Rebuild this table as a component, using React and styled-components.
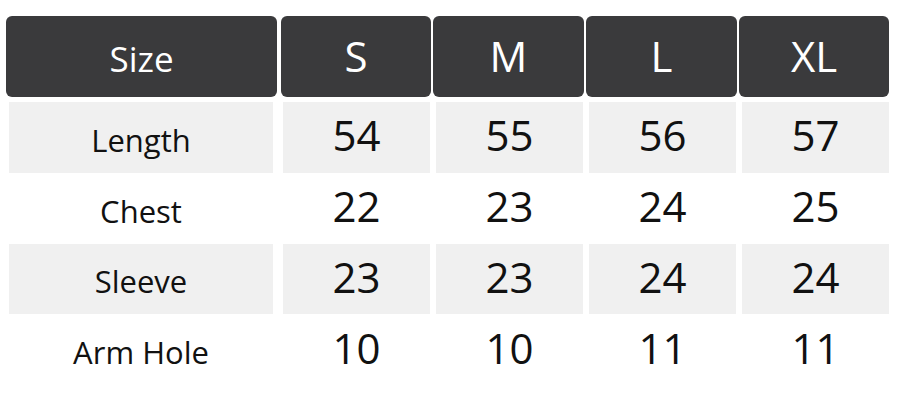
import React from "react";
import styled, { createGlobalStyle } from "styled-components";

const Global = createGlobalStyle`
  html, body { margin: 0; padding: 0; background: #ffffff; }
  body { font-family: "Open Sans", "Noto Sans", sans-serif; }
`;

const Chart = styled.div`
  width: 900px;
  height: 400px;
  padding-top: 16px;
  box-sizing: border-box;
  background: #ffffff;
`;

const HeaderRow = styled.div`
  display: grid;
  grid-template-columns: 273px 150px 151px 151px 150px;
  column-gap: 2px;
  margin-left: 6px;
  height: 81px;
`;

const HeaderCell = styled.div`
  display: flex;
  align-items: center;
  justify-content: center;
  background: #3a3a3c;
  color: #ffffff;
  border-radius: 6px;
  margin-right: ${(p) => (p.$first ? "2px" : "0")};
  font-size: ${(p) => (p.$first ? "35px" : "42px")};
  padding-top: ${(p) => (p.$first ? "4px" : "0")};
  padding-bottom: ${(p) => (p.$first ? "0" : "3px")};
  box-sizing: border-box;
`;

const Body = styled.div`
  margin-top: 5px;
  display: flex;
  flex-direction: column;
`;

const Row = styled.div`
  display: grid;
  grid-template-columns: 268px 147px 147px 147px 147px;
  column-gap: 6px;
  margin-left: 9px;
  height: 70.8px;
`;

const Cell = styled.div`
  display: flex;
  align-items: center;
  justify-content: center;
  background: ${(p) => (p.$shaded ? "#f0f0f0" : "transparent")};
  color: #111111;
  box-sizing: border-box;
`;

const LabelCell = styled(Cell)`
  margin-right: 4px;
  font-size: 31px;
  padding-top: 5px;
`;

const ValueCell = styled(Cell)`
  font-size: 42px;
  padding-bottom: 5px;
`;

const sizes = ["S", "M", "L", "XL"];
const rows = [
  ["Length", [54, 55, 56, 57]],
  ["Chest", [22, 23, 24, 25]],
  ["Sleeve", [23, 23, 24, 24]],
  ["Arm Hole", [10, 10, 11, 11]],
];

export default function App() {
  return (
    <>
      <Global />
      <Chart>
        <HeaderRow>
          <HeaderCell $first>Size</HeaderCell>
          {sizes.map((s) => (
            <HeaderCell key={s}>{s}</HeaderCell>
          ))}
        </HeaderRow>
        <Body>
          {rows.map(([label, values], i) => (
            <Row key={label}>
              <LabelCell $shaded={i % 2 === 0}>{label}</LabelCell>
              {values.map((v, j) => (
                <ValueCell key={j} $shaded={i % 2 === 0}>
                  {v}
                </ValueCell>
              ))}
            </Row>
          ))}
        </Body>
      </Chart>
    </>
  );
}
